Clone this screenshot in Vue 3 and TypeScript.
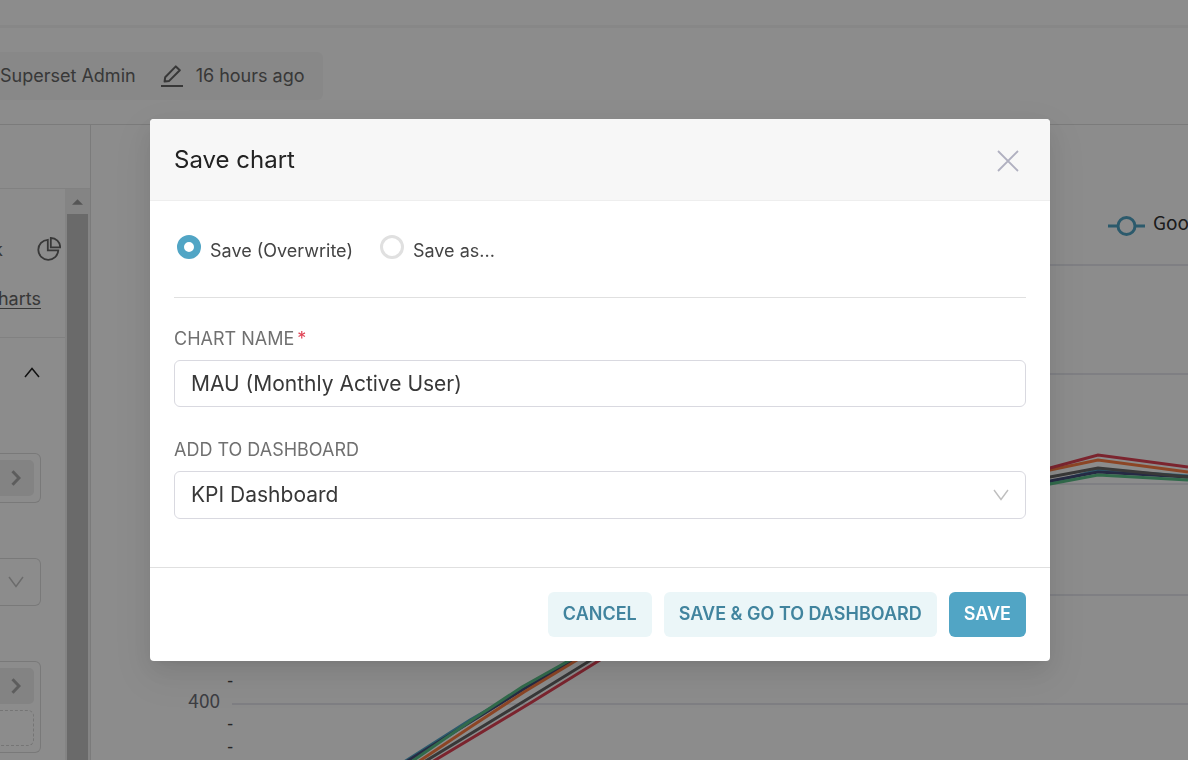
<script setup lang="ts">
import { ref } from 'vue'

interface Series { name: string; color: string; points: string }

const saveMode = ref<'overwrite' | 'saveas'>('overwrite')
const chartName = ref('MAU (Monthly Active User)')
const dashboard = ref('KPI Dashboard')

const gridLines: number[] = [265, 374, 484, 595, 704]
const minorTicks: number[] = [687, 730, 753]
const series: Series[] = [
  { name: 'teal', color: '#51a5c5', points: '404,762 470,720 522,690 571,661 900,520 1050,483 1098,470 1188,476' },
  { name: 'navy', color: '#454e7c', points: '406,762 472,721 522,690 573,661 900,520 1050,481 1098,472 1188,477' },
  { name: 'green', color: '#5ac189', points: '411,762 472,720 522,687 570,660 900,522 1050,484 1098,475 1188,480' },
  { name: 'orange', color: '#ff7f44', points: '418,762 472,726 524,692 577,660 900,514 1050,470 1098,460 1188,472' },
  { name: 'gray', color: '#666666', points: '424,762 526,700 591,660 900,518 1050,477 1098,468 1188,477' },
  { name: 'red', color: '#e04355', points: '432,762 532,702 600,660 900,512 1050,468 1098,455 1188,467' },
]
</script>

<template>
  <div class="page">
    <div class="explore">
      <div class="navbar"></div>
      <header class="title-bar">
        <div class="meta">
          <span>Superset Admin</span>
          <svg class="pencil" width="22" height="22" viewBox="0 0 22 22" fill="none" stroke="currentColor">
            <path d="M3.600 16.500L4.200 12.200L14.800 1.400L18.800 5.200L8.200 15.900Z" stroke-width="2" stroke-linejoin="round" />
            <path d="M0 21H22" stroke-width="2" />
          </svg>
          <span>16 hours ago</span>
        </div>
      </header>
      <div class="workspace">
        <aside class="panel">
          <div class="panel-top"></div>
          <div class="panel-scroll">
            <div class="controls">
              <div class="viz">
                <div class="viz-icons">
                  <span>k</span>
                  <svg width="24" height="24" viewBox="0 0 24 24" fill="none" stroke="currentColor" stroke-width="1.8">
                    <path d="M10.800 2.800A10 10 0 1 0 21.300 13.300H10.800Z" />
                    <path d="M13.800 1V10.300H23.200A9.400 9.400 0 0 0 13.800 1Z" />
                  </svg>
                </div>
                <a href="#" class="all-charts">harts</a>
              </div>
              <div class="section-toggle">
                <svg width="18" height="12" viewBox="0 0 18 12" fill="none" stroke="currentColor" stroke-width="1.5"><path d="M2 11L9 2.500L16 11" /></svg>
              </div>
              <div class="box">
                <div class="pill"><svg width="10" height="16" viewBox="0 0 10 16" fill="none" stroke="currentColor" stroke-width="3"><path d="M1.500 1.200L8 8L1.500 14.800" /></svg></div>
              </div>
              <div class="box select-box">
                <svg width="16" height="12" viewBox="0 0 16 12" fill="none" stroke="currentColor" stroke-width="1.5"><path d="M1 1L8 10.500L15 1" /></svg>
              </div>
              <div class="box">
                <div class="pill"><svg width="10" height="16" viewBox="0 0 10 16" fill="none" stroke="currentColor" stroke-width="3"><path d="M1.500 1.200L8 8L1.500 14.800" /></svg></div>
                <div class="drop"></div>
              </div>
            </div>
            <div class="scrollbar">
              <svg width="11" height="6" viewBox="0 0 12 6"><path d="M0 6L6 0L12 6Z" fill="#9c9c9c" /></svg>
              <div class="thumb"></div>
            </div>
          </div>
        </aside>
        <main class="chart">
          <svg width="100%" height="100%">
            <g transform="translate(-91 -125)">
              <line v-for="y in gridLines" :key="y" x1="232" x2="2400" :y1="y" :y2="y" stroke="#dfe1ea" stroke-width="1.5" />
              <polyline v-for="s in series" :key="s.name" :points="s.points" fill="none" :stroke="s.color" stroke-width="3" />
              <text x="220" y="708" text-anchor="end" class="axis">400</text>
              <text v-for="y in minorTicks" :key="y" x="233" :y="y" text-anchor="end" class="tick">-</text>
              <path d="M1108 226H1145" stroke="#51a5c5" stroke-width="3" />
              <circle cx="1126.500" cy="226" r="8.500" fill="#fff" stroke="#51a5c5" stroke-width="3" />
              <text x="1153" y="230" class="legend">Goo</text>
            </g>
          </svg>
        </main>
      </div>
    </div>

    <div class="mask">
      <form class="modal" role="dialog" aria-labelledby="modal-title" @submit.prevent>
        <div class="modal-header">
          <h1 id="modal-title">Save chart</h1>
          <button type="button" class="close" aria-label="Close">
            <svg width="22" height="22" viewBox="0 0 22 22" fill="none" stroke="currentColor" stroke-width="1.8"><path d="M1 1L21 21M21 1L1 21" /></svg>
          </button>
        </div>
        <div class="modal-body">
          <div class="radios">
            <input id="overwrite" v-model="saveMode" type="radio" name="mode" value="overwrite" />
            <label for="overwrite">Save (Overwrite)</label>
            <input id="saveas" v-model="saveMode" type="radio" name="mode" value="saveas" />
            <label for="saveas">Save as...</label>
          </div>
          <div class="field">
            <label for="chart-name">CHART NAME<span class="required">*</span></label>
            <input id="chart-name" v-model="chartName" type="text" />
          </div>
          <div class="field">
            <label for="dashboard">ADD TO DASHBOARD</label>
            <div class="select-wrap">
              <select id="dashboard" v-model="dashboard"><option>KPI Dashboard</option></select>
              <svg width="16" height="12" viewBox="0 0 16 12" fill="none" stroke="currentColor" stroke-width="1.4"><path d="M1 1L8 10.500L15 1" /></svg>
            </div>
          </div>
        </div>
        <div class="modal-footer">
          <button type="button" class="btn">CANCEL</button>
          <button type="button" class="btn">SAVE &amp; GO TO DASHBOARD</button>
          <button type="submit" class="btn primary">SAVE</button>
        </div>
      </form>
    </div>
  </div>
</template>

<style>
body { margin: 0; overflow: hidden; }
</style>

<style scoped>
* { box-sizing: border-box; }
.page { font-family: Inter, "Liberation Sans", sans-serif; color: #323232; }
.explore { height: 100vh; display: flex; flex-direction: column; background: #fff; overflow: hidden; }
.navbar { height: 28px; border-bottom: 3px solid #f6f6f6; flex: none; }
.title-bar { height: 97px; flex: none; display: flex; align-items: center; border-bottom: 1px solid #e0e0e0; }
.meta { display: flex; align-items: center; height: 48px; padding: 0 18px 1px 0; border-radius: 0 6px 6px 0; background: #f7f7f7; font-size: 18px; color: #666; }
.pencil { margin: 0 13px 0 25px; }
.workspace { flex: 1; display: flex; min-height: 0; }
.panel { width: 91px; flex: none; border-right: 1px solid #e0e0e0; display: flex; flex-direction: column; }
.panel-top { height: 64px; flex: none; border-bottom: 1px solid #ececec; }
.panel-scroll { flex: 1; min-height: 0; display: flex; }
.controls { flex: 1; overflow: hidden; color: #666; font-size: 18px; }
.viz { height: 149px; padding-top: 48px; border-bottom: 1px solid #ececec; }
.viz-icons { display: flex; justify-content: flex-end; align-items: center; gap: 34px; height: 24px; padding-right: 4px; }
.viz-icons svg { flex: none; }
.all-charts { display: block; width: 41px; margin-top: 26px; line-height: 24px; color: #666; direction: rtl; text-underline-offset: 3px; }
.section-toggle { height: 115px; padding: 28px 0 0 23px; color: #222; }
.section-toggle svg { display: block; }
.box { width: 41px; padding: 6px 6px 6px 0; border: 1px solid #dcdcdc; border-left: 0; border-radius: 0 6px 6px 0; margin-bottom: 55px; }
.pill { height: 36px; display: flex; align-items: center; padding-left: 11px; background: #eee; border-radius: 0 5px 5px 0; color: #aaa; }
.select-box { height: 48px; display: flex; align-items: center; padding-left: 8px; color: #c4c4c4; }
.drop { height: 36px; margin-top: 6px; border: 1px dashed #d6d6d6; border-left: 0; border-radius: 0 6px 6px 0; }
.scrollbar { width: 25px; flex: none; display: flex; flex-direction: column; align-items: center; padding-top: 10px; background: #f0f0f0; }
.thumb { width: 21px; flex: 1; margin-top: 9px; background: #c1c1c1; }
.chart { flex: 1; min-width: 0; }
.chart svg { display: block; }
.axis, .legend { font-family: "Noto Sans CJK SC", sans-serif; font-size: 19px; fill: #6e7079; }
.legend { fill: #333; }
.tick { font-family: "Noto Sans", sans-serif; font-size: 18px; fill: #444; }
.mask { position: fixed; inset: 0; padding: 119px 0 0 12px; background: rgba(0, 0, 0, 0.45); }
.modal { width: 100%; max-width: 900px; margin: 0 auto; background: #fff; border-radius: 4px; overflow: hidden; box-shadow: 0 4px 9px -6px rgba(0, 0, 0, 0.12), 0 9px 24px rgba(0, 0, 0, 0.08), 0 14px 42px 12px rgba(0, 0, 0, 0.05); }
.modal-header { height: 82px; padding: 0 31px 0 24px; display: flex; align-items: center; justify-content: space-between; background: #f7f7f7; border-bottom: 1px solid #eee; }
h1 { margin: 0; font-size: 24px; line-height: 32px; font-weight: 400; color: #222; }
.close { display: block; padding: 2px 0 0; border: 0; background: none; color: #b0b0c0; line-height: 0; }
.modal-body { padding: 24px 24px 48px; }
.radios { height: 73px; display: flex; align-items: flex-start; padding: 10px 3px 0; border-bottom: 1px solid #e0e0e0; font-size: 18px; color: #444; line-height: 32px; margin-bottom: 28px; }
.radios input { appearance: none; width: 24px; height: 24px; margin: 0 9px 0 0; border: 3px solid #e0e0e0; border-radius: 50%; background: #fff; }
.radios input:checked { border: 7px solid #51a5c5; }
.radios label + input { margin-left: 27px; }
.field + .field { margin-top: 30px; }
.field label { display: block; font-size: 18px; line-height: 26px; margin-bottom: 8px; color: #707070; }
.required { color: #e04355; margin-left: 3px; }
.field input, .field select { display: block; width: 100%; height: 47px; padding: 0 16px; border: 1px solid #d9d9e0; border-radius: 6px; background: #fff; font-family: inherit; font-size: 21px; color: #383838; outline: 0; }
.field select { appearance: none; height: 48px; padding-bottom: 2px; }
.select-wrap { display: grid; align-items: center; }
.select-wrap > * { grid-area: 1 / 1; }
.select-wrap svg { justify-self: end; margin-right: 17px; color: #bfbfbf; pointer-events: none; }
.modal-footer { display: flex; justify-content: flex-end; gap: 12px; padding: 24px; border-top: 1px solid #e0e0e0; }
.btn { height: 45px; padding: 0 15px 2px; border: 0; border-radius: 6px; background: #ebf6f8; color: #41849e; font-family: inherit; font-size: 18px; font-weight: 600; white-space: nowrap; }
.primary { background: #51a5c5; color: #fff; }
</style>
